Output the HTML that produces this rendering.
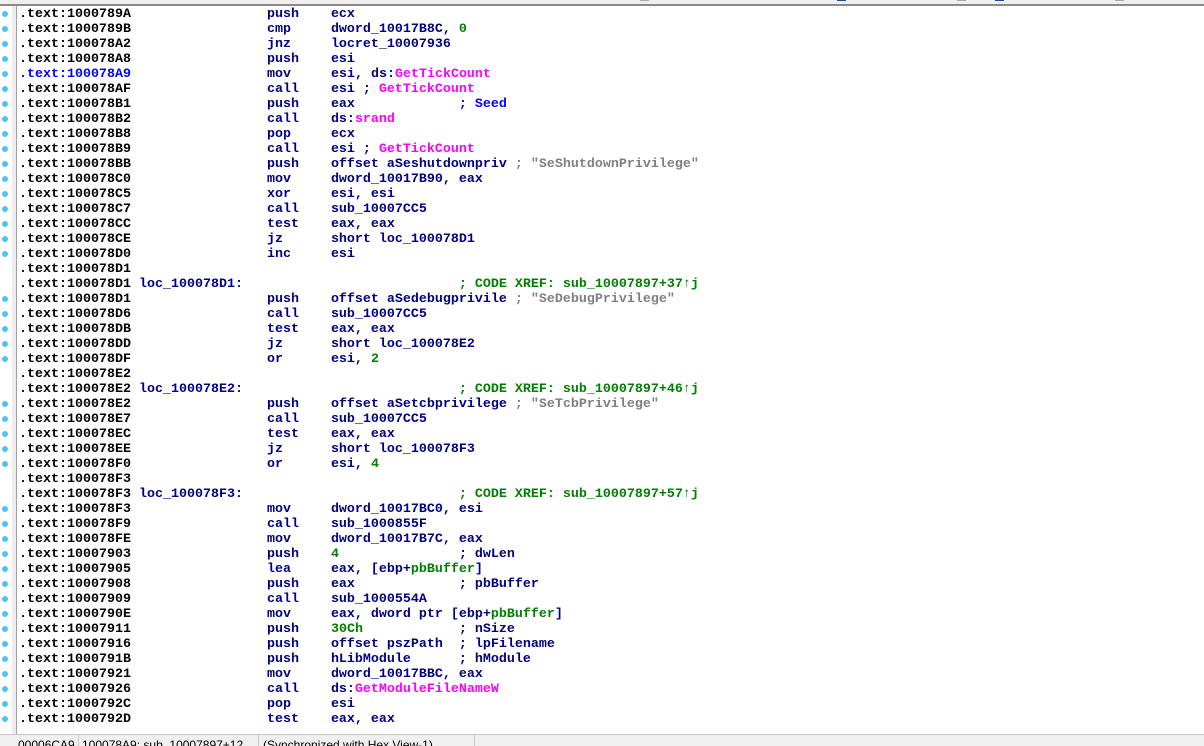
<!DOCTYPE html>
<html><head><meta charset="utf-8"><style>
html,body{margin:0;padding:0;width:1204px;height:745px;overflow:hidden;background:#fff;}
#top{position:absolute;left:0;top:0;width:1204px;height:4px;background:#efefef;}
#topl{position:absolute;left:0;top:4px;width:1204px;height:2px;background:#8a8a8a;}
.tab{position:absolute;top:0;height:1px;width:9px;}
#gut{position:absolute;left:12px;top:6px;width:4px;height:729px;background:#ececec;}
#gutb{position:absolute;left:16px;top:6px;width:1px;height:729px;background:#a0a0a0;}
#code{position:absolute;left:19px;top:7px;margin:0;font-family:"Liberation Mono",monospace;font-weight:bold;font-size:13.33px;line-height:15px;color:#000;white-space:pre;}
.i{color:#000080}.b{color:#0000ff}.p{color:#ff00ff}.g{color:#008000}.s{color:#808080}
.dot{position:absolute;left:2px;width:6px;height:6px;border-radius:50%;background:#4fc3f7;}
#status{position:absolute;left:0;top:734px;width:1204px;height:11px;background:#f0f0f0;border-top:1px solid #c8c8c8;font-family:"Liberation Sans",sans-serif;font-size:12px;color:#000;overflow:hidden;}
#status span{position:absolute;top:3px;white-space:nowrap;}
.sep{position:absolute;top:0;width:1px;height:11px;background:#c8c8c8;}
</style></head><body>
<div id="top"></div><div id="topl"></div>
<div class="tab" style="left:640px;background:#aaa"></div>
<div class="tab" style="left:837px;background:#1a4f8f"></div>
<div class="tab" style="left:957px;background:#aaa"></div>
<div class="tab" style="left:995px;background:#1a4f8f"></div>
<div class="tab" style="left:1115px;background:#aaa"></div>
<div id="gut"></div><div id="gutb"></div>
<div id="dots"></div>
<pre id="code">.text:1000789A                 <span class="i">push    ecx</span>
.text:1000789B                 <span class="i">cmp     dword_10017B8C, </span><span class="g">0</span>
.text:100078A2                 <span class="i">jnz     locret_10007936</span>
.text:100078A8                 <span class="i">push    esi</span>
<span class="b">.text:100078A9</span>                 <span class="i">mov     esi, ds:</span><span class="p">GetTickCount</span>
.text:100078AF                 <span class="i">call    esi ; </span><span class="p">GetTickCount</span>
.text:100078B1                 <span class="i">push    eax</span>             <span class="b">; Seed</span>
.text:100078B2                 <span class="i">call    ds:</span><span class="p">srand</span>
.text:100078B8                 <span class="i">pop     ecx</span>
.text:100078B9                 <span class="i">call    esi ; </span><span class="p">GetTickCount</span>
.text:100078BB                 <span class="i">push    offset aSeshutdownpriv</span> <span class="s">; "SeShutdownPrivilege"</span>
.text:100078C0                 <span class="i">mov     dword_10017B90, eax</span>
.text:100078C5                 <span class="i">xor     esi, esi</span>
.text:100078C7                 <span class="i">call    sub_10007CC5</span>
.text:100078CC                 <span class="i">test    eax, eax</span>
.text:100078CE                 <span class="i">jz      short loc_100078D1</span>
.text:100078D0                 <span class="i">inc     esi</span>
.text:100078D1
.text:100078D1 <span class="i">loc_100078D1:</span>                           <span class="g">; CODE XREF: sub_10007897+37↑j</span>
.text:100078D1                 <span class="i">push    offset aSedebugprivile</span> <span class="s">; "SeDebugPrivilege"</span>
.text:100078D6                 <span class="i">call    sub_10007CC5</span>
.text:100078DB                 <span class="i">test    eax, eax</span>
.text:100078DD                 <span class="i">jz      short loc_100078E2</span>
.text:100078DF                 <span class="i">or      esi, </span><span class="g">2</span>
.text:100078E2
.text:100078E2 <span class="i">loc_100078E2:</span>                           <span class="g">; CODE XREF: sub_10007897+46↑j</span>
.text:100078E2                 <span class="i">push    offset aSetcbprivilege</span> <span class="s">; "SeTcbPrivilege"</span>
.text:100078E7                 <span class="i">call    sub_10007CC5</span>
.text:100078EC                 <span class="i">test    eax, eax</span>
.text:100078EE                 <span class="i">jz      short loc_100078F3</span>
.text:100078F0                 <span class="i">or      esi, </span><span class="g">4</span>
.text:100078F3
.text:100078F3 <span class="i">loc_100078F3:</span>                           <span class="g">; CODE XREF: sub_10007897+57↑j</span>
.text:100078F3                 <span class="i">mov     dword_10017BC0, esi</span>
.text:100078F9                 <span class="i">call    sub_1000855F</span>
.text:100078FE                 <span class="i">mov     dword_10017B7C, eax</span>
.text:10007903                 <span class="i">push    </span><span class="g">4</span>               <span class="i">; dwLen</span>
.text:10007905                 <span class="i">lea     eax, [ebp+</span><span class="g">pbBuffer</span><span class="i">]</span>
.text:10007908                 <span class="i">push    eax             ; pbBuffer</span>
.text:10007909                 <span class="i">call    sub_1000554A</span>
.text:1000790E                 <span class="i">mov     eax, dword ptr [ebp+</span><span class="g">pbBuffer</span><span class="i">]</span>
.text:10007911                 <span class="i">push    </span><span class="g">30Ch</span>            <span class="i">; nSize</span>
.text:10007916                 <span class="i">push    offset pszPath  ; lpFilename</span>
.text:1000791B                 <span class="i">push    hLibModule      ; hModule</span>
.text:10007921                 <span class="i">mov     dword_10017BBC, eax</span>
.text:10007926                 <span class="i">call    ds:</span><span class="p">GetModuleFileNameW</span>
.text:1000792C                 <span class="i">pop     esi</span>
.text:1000792D                 <span class="i">test    eax, eax</span></pre>
<div id="status">
<span style="left:18px">00006CA9</span><div class="sep" style="left:78px"></div>
<span style="left:82px">100078A9: sub_10007897+12</span><div class="sep" style="left:258px"></div>
<span style="left:263px">(Synchronized with Hex View-1)</span><div class="sep" style="left:474px"></div>
</div>
<script>
var skip={17:1,18:1,24:1,25:1,31:1,32:1};
var h='';for(var i=0;i<48;i++){if(skip[i])continue;h+='<div class="dot" style="top:'+(11+15*i)+'px"></div>';}
document.getElementById('dots').innerHTML=h;
</script>
</body></html>
